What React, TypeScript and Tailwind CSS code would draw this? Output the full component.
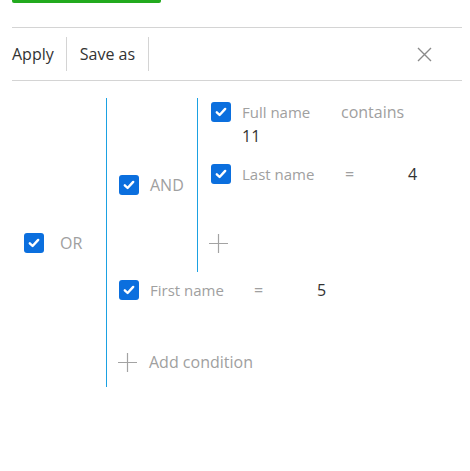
import React from "react";

const font = { fontFamily: '"Open Sans", "Liberation Sans", sans-serif' };

function Checkbox() {
  return (
    <div className="w-5 h-5 shrink-0 rounded-[3px] bg-[#0b6fde] flex items-center justify-center">
      <svg width="14" height="14" viewBox="0 0 14 14" fill="none">
        <path d="M2.8 7.3 L5.6 10 L11.2 3.9" stroke="#fff" strokeWidth="2.4" strokeLinecap="round" strokeLinejoin="round" />
      </svg>
    </div>
  );
}

function Plus() {
  return (
    <svg width="19" height="19" viewBox="0 0 19 19" className="shrink-0">
      <path d="M9.5 0 V19 M0 9.5 H19" stroke="#a3a3a3" strokeWidth="1.2" />
    </svg>
  );
}

function Close() {
  return (
    <svg width="15" height="15" viewBox="0 0 15 15">
      <path d="M1 1 L14 14 M14 1 L1 14" stroke="#8a8a8a" strokeWidth="1.4" />
    </svg>
  );
}

function Condition({ label, op, value, labelWidth }: { label: string; op: string; value: string; labelWidth: string }) {
  return (
    <div className="flex items-center gap-[11px]">
      <Checkbox />
      <div className="flex items-center">
        <span className={`${labelWidth} text-[15px] text-[#a0a0a0]`}>{label}</span>
        <span className="w-[63px] text-[16px] text-[#a0a0a0]">{op}</span>
        <span className="text-[16px] text-[#333]">{value}</span>
      </div>
    </div>
  );
}

export default function App() {
  return (
    <div className="w-[470px] h-[471px] bg-white" style={font}>
      {/* Green action bar peeking from above */}
      <div className="ml-3 w-[149px] h-[3px] rounded-b-[2px] bg-[#22aa1e]" />

      {/* Toolbar */}
      <div className="ml-3 mr-2 mt-6 border-y border-[#d4d4d4] h-[54px] flex items-center">
        <button className="pr-[12px] h-[34px] border-r border-[#d4d4d4] text-[16px] text-[#333]">Apply</button>
        <button className="px-[13px] h-[34px] border-r border-[#d4d4d4] text-[16px] text-[#333]">Save as</button>
        <div className="flex-1" />
        <div className="mr-[30px] flex items-center">
          <Close />
        </div>
      </div>

      {/* Filter tree */}
      <div className="mt-[17px] flex">
        <div className="w-[106px] pl-6 flex items-center gap-4">
          <Checkbox />
          <span className="text-[16px] text-[#a0a0a0]">OR</span>
        </div>

        <div className="h-[289px] border-l border-[#1ba1e2] pl-3 flex flex-col">
          {/* AND group */}
          <div className="flex">
            <div className="w-[78px] flex items-center gap-[11px]">
              <Checkbox />
              <span className="text-[16px] text-[#a0a0a0]">AND</span>
            </div>
            <div className="h-[174px] border-l border-[#1ba1e2] pl-[13px] pt-1 flex flex-col">
              <div className="flex gap-[11px]">
                <Checkbox />
                <div className="flex flex-col">
                  <div className="h-5 flex items-center">
                    <span className="w-[99px] text-[15px] text-[#a0a0a0]">Full name</span>
                    <span className="text-[16px] text-[#a0a0a0]">contains</span>
                  </div>
                  <span className="mt-[3px] leading-[22px] text-[16px] text-[#333]">11</span>
                </div>
              </div>
              <div className="mt-[15px]">
                <Condition label="Last name" op="=" value="4" labelWidth="w-[103px]" />
              </div>
              <div className="mt-[48px] -ml-[2px]">
                <Plus />
              </div>
            </div>
          </div>

          {/* Single condition */}
          <div className="mt-[6px]">
            <Condition label="First name" op="=" value="5" labelWidth="w-[104px]" />
          </div>

          <div className="mt-[48px] -ml-px flex items-center gap-3">
            <Plus />
            <span className="text-[16px] text-[#a0a0a0]">Add condition</span>
          </div>
        </div>
      </div>
    </div>
  );
}
